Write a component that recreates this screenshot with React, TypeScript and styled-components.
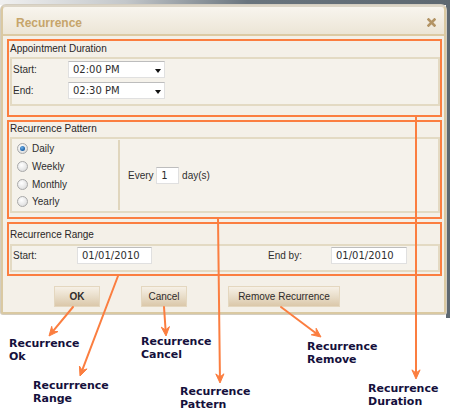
import React from "react";
import styled, { createGlobalStyle } from "styled-components";

const Global = createGlobalStyle`
  html, body { margin: 0; padding: 0; background: #ffffff; }
  body { font-family: "Liberation Sans", Arial, sans-serif; }
  * { box-sizing: border-box; }
`;

const ORANGE = "#fb7e40";

const Page = styled.div`
  position: relative;
  width: 450px;
  height: 416px;
  overflow: hidden;
  background: #ffffff;
`;

const Backdrop = styled.div`
  height: 318px;
  padding: 5px 4px 0 1px;
  background:
    linear-gradient(to right, #f0f0f0 0%, #c3c7ca 28%, #6a757e 55%, #5d6871 100%) top left / 100% 5px no-repeat,
    linear-gradient(#5d6871, #5d6871) top right / 4px 318px no-repeat,
    #ffffff;
`;

const Dialog = styled.div`
  width: 445px;
  height: 309px;
  border: 2px solid #dac9a2;
  border-top-color: #dcd5c6;
  border-radius: 5px 5px 2px 2px;
  background: #f4f0e8;
  box-shadow: 0 0 0 1px #d3cdc0;
  display: flex;
  flex-direction: column;
`;

const TitleBar = styled.div`
  flex: none;
  height: 27px;
  display: flex;
  align-items: center;
  justify-content: space-between;
  padding: 4px 8px 0 13px;
  background: linear-gradient(#f8f5ee, #ece5d6);
  border-radius: 4px 4px 0 0;
`;

const Title = styled.span`
  font: bold 12px "Liberation Sans", Arial, sans-serif;
  color: #c6a56b;
`;

const Body = styled.div`
  flex: 1;
  border-top: 2px solid #dccaa3;
  padding: 3px 0 0 4px;
  display: flex;
  flex-direction: column;
  gap: 3px;
`;

const Section = styled.div<{ $h: number }>`
  width: 435px;
  height: ${(p) => p.$h}px;
  border: 2px solid ${ORANGE};
  padding: 0 0 0 1px;
  display: flex;
  flex-direction: column;
`;

const Legend = styled.div<{ $lh: number; $pt?: number; $pb?: number }>`
  flex: none;
  line-height: ${(p) => p.$lh}px;
  padding-top: ${(p) => p.$pt ?? 0}px;
  padding-bottom: ${(p) => p.$pb ?? 0}px;
  font-size: 10px;
  color: #2a2626;
  white-space: nowrap;
`;

const Box = styled.div<{ $h: number }>`
  flex: none;
  height: ${(p) => p.$h}px;
  width: 430px;
  border: 2px solid #e3dac3;
  background: #f5f2eb;
`;

const DurationGrid = styled(Box)`
  display: grid;
  grid-template-columns: 55px 97px;
  grid-auto-rows: 17px;
  row-gap: 4px;
  align-items: center;
  padding: 2px 0 0 1px;
`;

const Label = styled.span`
  font-size: 10px;
  color: #2e2e2e;
  white-space: nowrap;
`;

const Select = styled.div`
  position: relative;
  width: 97px;
  height: 17px;
  background: #ffffff;
  border: 1px solid #e0e0e0;
  border-top-color: #bdbdbd;
  padding-left: 4px;
  font: 10px/15px "DejaVu Sans", Verdana, sans-serif;
  color: #2e2e2e;
`;

const Caret = styled.span`
  position: absolute;
  right: 3px;
  top: 7px;
  width: 0;
  height: 0;
  border-left: 3.5px solid transparent;
  border-right: 3.5px solid transparent;
  border-top: 4px solid #111111;
`;

const PatternBox = styled(Box)`
  display: flex;
`;

const RadioList = styled.div`
  width: 106px;
  padding: 1px 0 0 5px;
  display: flex;
  flex-direction: column;
`;

const RadioRow = styled.div`
  height: 17.7px;
  display: flex;
  align-items: center;
  gap: 4px;
  font-size: 10px;
  color: #2e2e2e;
`;

const Radio = styled.span<{ $checked?: boolean }>`
  width: 11px;
  height: 11px;
  border-radius: 50%;
  border: 1px solid #a9a9a9;
  background: radial-gradient(circle at 40% 35%, #ffffff 0%, #e6e6e6 60%, #cfcfcf 100%);
  display: flex;
  align-items: center;
  justify-content: center;
  &::after {
    content: "";
    display: ${(p) => (p.$checked ? "block" : "none")};
    width: 5px;
    height: 5px;
    border-radius: 50%;
    background: radial-gradient(circle at 40% 35%, #6fb0e8 0%, #2268ad 60%, #134a82 100%);
  }
`;

const Separator = styled.div`
  width: 2px;
  margin: 1px 0;
  background: #e0d6bd;
`;

const EveryWrap = styled.div`
  flex: 1;
  display: flex;
  align-items: center;
  padding-left: 8px;
  font-size: 10px;
  color: #2e2e2e;
`;

const TextInput = styled.div<{ $w: number }>`
  width: ${(p) => p.$w}px;
  height: 17px;
  background: #ffffff;
  border: 1px solid #e0e0e0;
  border-top-color: #bdbdbd;
  padding-left: 4px;
  font: 10px/15px "DejaVu Sans", Verdana, sans-serif;
  color: #2e2e2e;
`;

const RangeGrid = styled(Box)`
  display: grid;
  grid-template-columns: 64px 75px 116px 63px 76px;
  grid-template-rows: 17px;
  align-items: center;
  padding: 1px 0 0 1px;
`;

const ButtonRow = styled.div`
  display: flex;
  gap: 41px;
  margin-top: 7px;
  padding-left: 47px;
`;

const Button = styled.div<{ $w: number; $bold?: boolean }>`
  width: ${(p) => p.$w}px;
  height: 21px;
  border: 1px solid #e4d7bf;
  background: linear-gradient(#f6f0e6 0%, #eadfcc 45%, #dbc8aa 100%);
  display: flex;
  align-items: center;
  justify-content: center;
  font-size: 10px;
  font-weight: ${(p) => (p.$bold ? "bold" : "normal")};
  color: #2f2b2b;
`;

const Overlay = styled.svg`
  position: absolute;
  left: 0;
  top: 0;
  pointer-events: none;
`;

const Callout = styled.div<{ $x: number; $y: number }>`
  position: absolute;
  left: ${(p) => p.$x}px;
  top: ${(p) => p.$y}px;
  font: bold 11px/13px "DejaVu Sans", Verdana, sans-serif;
  color: #15103c;
  white-space: nowrap;
`;

type Arrow = [number, number, number, number];
const arrows: Arrow[] = [
  [73, 307, 49, 336],
  [118, 276, 80, 376],
  [164, 307, 166, 336],
  [218, 218, 220, 383],
  [281, 307, 321, 337],
  [416, 116, 416, 379],
];

function headPoints([x1, y1, x2, y2]: Arrow): string {
  const a = Math.atan2(y2 - y1, x2 - x1);
  const len = 10;
  const spread = 0.42;
  const p1 = [x2 - len * Math.cos(a - spread), y2 - len * Math.sin(a - spread)];
  const p2 = [x2 - len * Math.cos(a + spread), y2 - len * Math.sin(a + spread)];
  const m = [x2 - 6 * Math.cos(a), y2 - 6 * Math.sin(a)];
  return `${p1[0]},${p1[1]} ${x2},${y2} ${p2[0]},${p2[1]} ${m[0]},${m[1]}`;
}

function shaftEnd([x1, y1, x2, y2]: Arrow): [number, number] {
  const a = Math.atan2(y2 - y1, x2 - x1);
  return [x2 - 5 * Math.cos(a), y2 - 5 * Math.sin(a)];
}

const callouts: { x: number; y: number; a: string; b: string }[] = [
  { x: 9, y: 337, a: "Recurrence", b: "Ok" },
  { x: 141, y: 335, a: "Recurrence", b: "Cancel" },
  { x: 33, y: 379, a: "Recurrrence", b: "Range" },
  { x: 180, y: 385, a: "Recurrence", b: "Pattern" },
  { x: 307, y: 340, a: "Recurrence", b: "Remove" },
  { x: 368, y: 382, a: "Recurrence", b: "Duration" },
];

export default function App() {
  return (
    <Page>
      <Global />
      <Backdrop>
        <Dialog>
          <TitleBar>
            <Title>Recurrence</Title>
            <svg width="9" height="9" viewBox="0 0 9 9">
              <path d="M1.5 1.5 L7.5 7.5 M7.5 1.5 L1.5 7.5" stroke="#b39465" strokeWidth="2.6" strokeLinecap="square" />
            </svg>
          </TitleBar>
          <Body>
            <Section $h={78}>
              <Legend $lh={16}>Appointment Duration</Legend>
              <DurationGrid $h={49}>
                <Label>Start:</Label>
                <Select>
                  02:00 PM
                  <Caret />
                </Select>
                <Label>End:</Label>
                <Select>
                  02:30 PM
                  <Caret />
                </Select>
              </DurationGrid>
            </Section>
            <Section $h={99}>
              <Legend $lh={13} $pb={2}>Recurrence Pattern</Legend>
              <PatternBox $h={76}>
                <RadioList>
                  <RadioRow>
                    <Radio $checked />
                    Daily
                  </RadioRow>
                  <RadioRow>
                    <Radio />
                    Weekly
                  </RadioRow>
                  <RadioRow>
                    <Radio />
                    Monthly
                  </RadioRow>
                  <RadioRow>
                    <Radio />
                    Yearly
                  </RadioRow>
                </RadioList>
                <Separator />
                <EveryWrap>
                  Every&nbsp;
                  <TextInput $w={23}>1</TextInput>
                  &nbsp;day(s)
                </EveryWrap>
              </PatternBox>
            </Section>
            <Section $h={54}>
              <Legend $lh={18} $pt={2}>Recurrence Range</Legend>
              <RangeGrid $h={28}>
                <Label>Start:</Label>
                <TextInput $w={75}>01/01/2010</TextInput>
                <span />
                <Label>End by:</Label>
                <TextInput $w={76}>01/01/2010</TextInput>
              </RangeGrid>
            </Section>
            <ButtonRow>
              <Button $w={46} $bold>OK</Button>
              <Button $w={46}>Cancel</Button>
              <Button $w={112}>Remove Recurrence</Button>
            </ButtonRow>
          </Body>
        </Dialog>
      </Backdrop>
      <Overlay width="450" height="416" viewBox="0 0 450 416">
        {arrows.map((ar, i) => {
          const [ex, ey] = shaftEnd(ar);
          return (
            <g key={i}>
              <line x1={ar[0]} y1={ar[1]} x2={ex} y2={ey} stroke={ORANGE} strokeWidth="2" strokeLinecap="round" />
              <polygon points={headPoints(ar)} fill={ORANGE} stroke={ORANGE} strokeWidth="1" strokeLinejoin="round" />
            </g>
          );
        })}
      </Overlay>
      {callouts.map((c) => (
        <Callout key={c.b} $x={c.x} $y={c.y}>
          {c.a}
          <br />
          {c.b}
        </Callout>
      ))}
    </Page>
  );
}
